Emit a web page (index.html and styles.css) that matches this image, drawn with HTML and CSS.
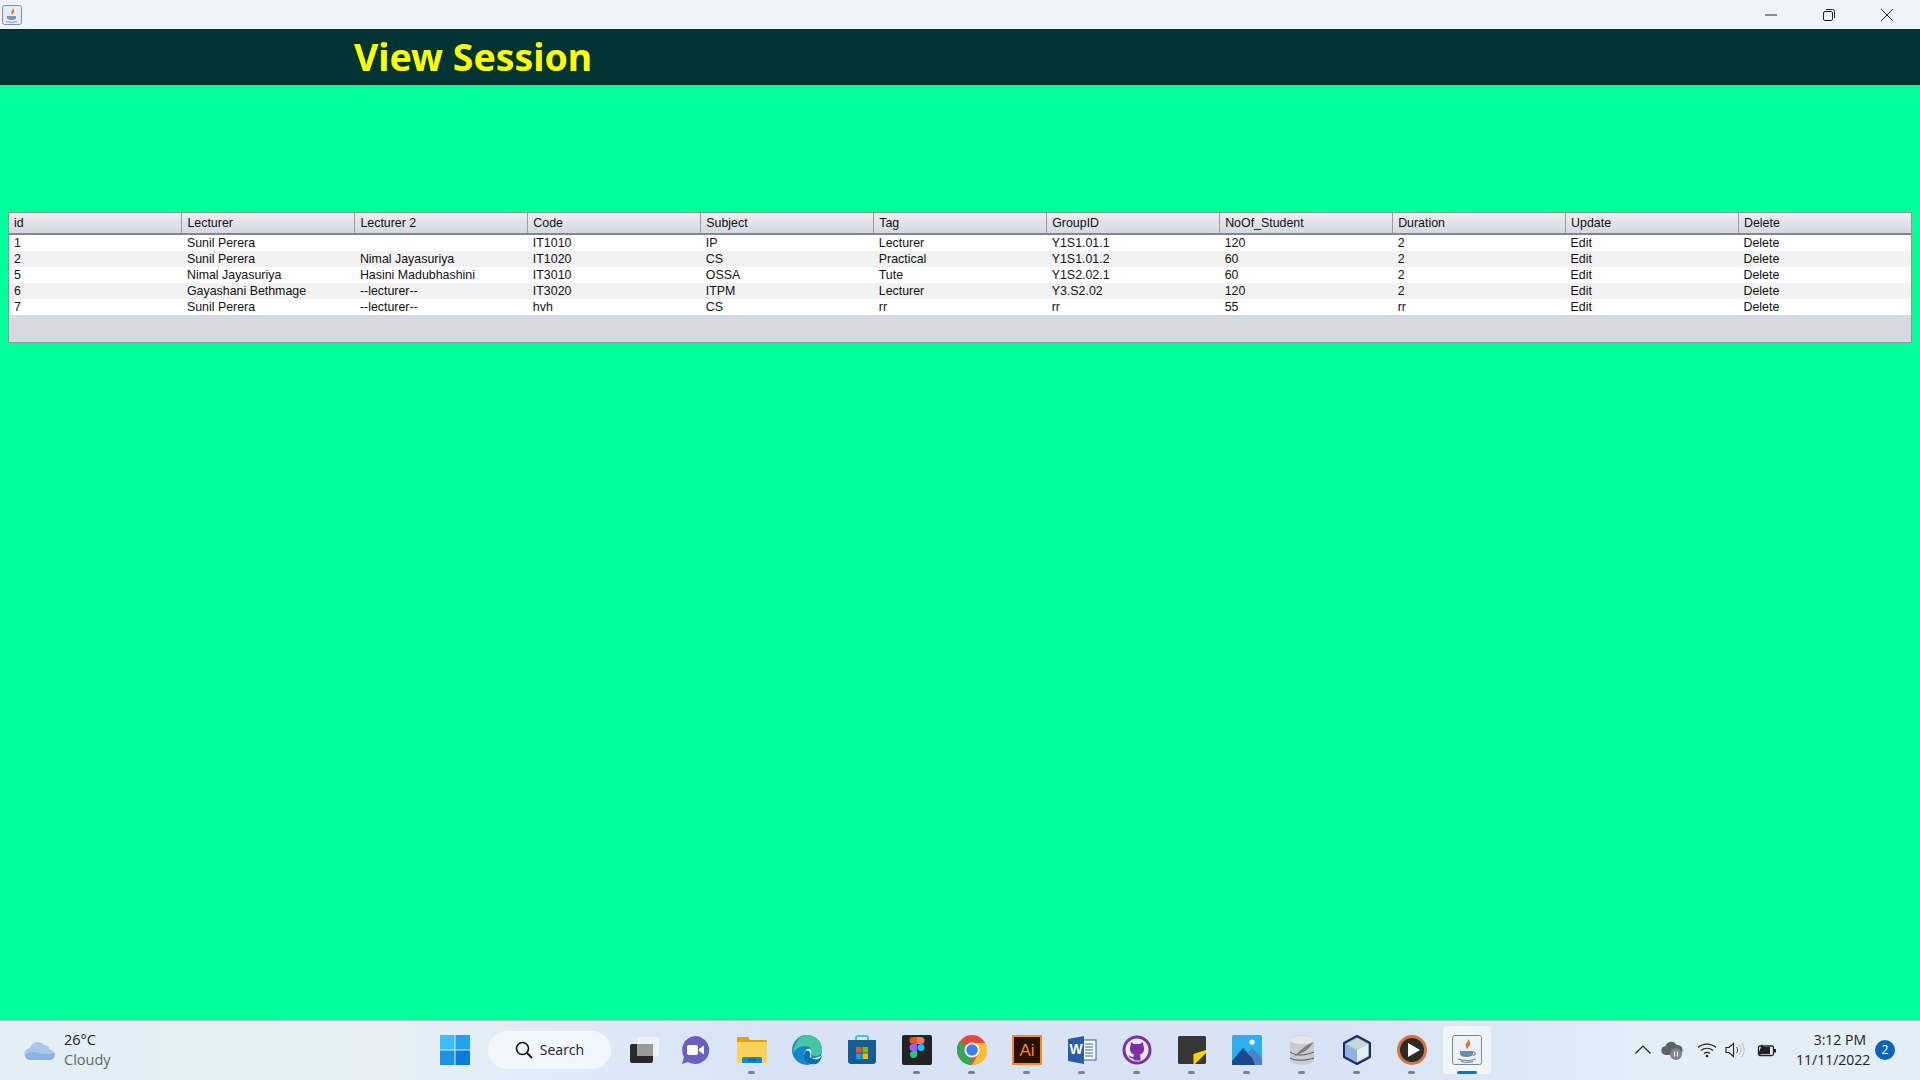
FILE: index.html
```html
<!DOCTYPE html>
<html>
	<head>
		<meta charset="utf-8">
		<title>View Session</title>
		<link rel="stylesheet" href="styles.css">
	</head>
	<body>
		<!-- window title bar -->
		<div class="titlebar">
			<div class="app-icon">
				<svg width="20" height="20" viewBox="0 0 20 20">
					<rect x="0.5" y="0.5" width="19" height="19" rx="2" fill="#e9edf3" stroke="#7f93aa"/>
					<path d="M10.5 3c1 2-2 3-1 5.500 .5 1 1 1 1.500 1.500-.5-2 2-3 .8-5.500z" fill="#e2762c"/>
					<path d="M5 11h9v2c0 1.500-2 2-4.500 2S5 14.500 5 13z" fill="#7c9ab8"/>
					<path d="M4 16.500c3 1 8 1 11 0" stroke="#7c9ab8" fill="none"/>
				</svg>
			</div>
			<div class="win-buttons">
				<div class="win-btn"><svg width="12" height="12" viewBox="0 0 12 12"><path d="M0 6h12" stroke="#222" fill="none"/></svg></div>
				<div class="win-btn"><svg width="12" height="12" viewBox="0 0 12 12"><rect x="0.500" y="2.500" width="9" height="9" rx="1.500" fill="none" stroke="#222"/><path d="M3 .500h6.500a2 2 0 0 1 2 2V9" fill="none" stroke="#222"/></svg></div>
				<div class="win-btn"><svg width="12" height="12" viewBox="0 0 12 12"><path d="M0 0l12 12M12 0L0 12" stroke="#222" fill="none"/></svg></div>
			</div>
		</div>

		<!-- heading -->
		<div class="header">
			<h1>View Session</h1>
		</div>

		<!-- session table -->
		<div class="content">
			<div class="table-box">
				<table class="sessions">
					<thead>
						<tr>
							<th>id</th><th>Lecturer</th><th>Lecturer 2</th><th>Code</th><th>Subject</th><th>Tag</th><th>GroupID</th><th>NoOf_Student</th><th>Duration</th><th>Update</th><th>Delete</th>
						</tr>
					</thead>
					<tbody>
						<tr><td>1</td><td>Sunil Perera</td><td></td><td>IT1010</td><td>IP</td><td>Lecturer</td><td>Y1S1.01.1</td><td>120</td><td>2</td><td>Edit</td><td>Delete</td></tr>
						<tr><td>2</td><td>Sunil Perera</td><td>Nimal Jayasuriya</td><td>IT1020</td><td>CS</td><td>Practical</td><td>Y1S1.01.2</td><td>60</td><td>2</td><td>Edit</td><td>Delete</td></tr>
						<tr><td>5</td><td>Nimal Jayasuriya</td><td>Hasini Madubhashini</td><td>IT3010</td><td>OSSA</td><td>Tute</td><td>Y1S2.02.1</td><td>60</td><td>2</td><td>Edit</td><td>Delete</td></tr>
						<tr><td>6</td><td>Gayashani Bethmage</td><td>--lecturer--</td><td>IT3020</td><td>ITPM</td><td>Lecturer</td><td>Y3.S2.02</td><td>120</td><td>2</td><td>Edit</td><td>Delete</td></tr>
						<tr><td>7</td><td>Sunil Perera</td><td>--lecturer--</td><td>hvh</td><td>CS</td><td>rr</td><td>rr</td><td>55</td><td>rr</td><td>Edit</td><td>Delete</td></tr>
					</tbody>
				</table>
			</div>
		</div>

		<!-- windows taskbar -->
		<div class="taskbar">
			<div class="weather">
				<svg width="32" height="24" viewBox="0 0 32 24">
					<path d="M7 22a6 6 0 0 1-1-12 8 8 0 0 1 14-3 6.500 6.500 0 0 1 6 5 5 5 0 0 1 0 10z" fill="#a9c6ef"/>
					<path d="M1 17c4-3 9-4 14-2s11 1 16 0c0 3-2 7-5 7H7c-3 0-6-2-6-5z" fill="#8db2e6"/>
				</svg>
				<div class="weather-text">
					<div class="temp">26°C</div>
					<div class="sky">Cloudy</div>
				</div>
			</div>
			<div class="slots">
				<div class="slot">
					<svg width="30" height="30" viewBox="0 0 30 30">
						<rect x="0" y="0" width="14.500" height="14.500" fill="#3cbdf6"/>
						<rect x="15.500" y="0" width="14.500" height="14.500" fill="#1fa2ee"/>
						<rect x="0" y="15.500" width="14.500" height="14.500" fill="#1b94e6"/>
						<rect x="15.500" y="15.500" width="14.500" height="14.500" fill="#0b7cd8"/>
					</svg>
				</div>
				<div class="search">
					<svg width="18" height="18" viewBox="0 0 18 18"><circle cx="7.500" cy="7.500" r="6" fill="none" stroke="#111" stroke-width="1.600"/><path d="M12 12l5 5" stroke="#111" stroke-width="1.800"/></svg>
					<span>Search</span>
				</div>
				<div class="slot taskview">
					<svg width="30" height="30" viewBox="0 0 30 30">
						<rect x="1" y="9" width="23" height="19" rx="2" fill="#2a2a2a"/>
						<rect x="8" y="2" width="22" height="19" rx="1" fill="#eef1f6"/>
						<rect x="8" y="9" width="16" height="12" fill="#9a9a9a"/>
					</svg>
				</div>
				<div class="slot chat">
					<svg width="30" height="30" viewBox="0 0 30 30">
						<path d="M15 1a14 14 0 1 1-7 26l-6 2 2-7A14 14 0 0 1 15 1z" fill="#6a5fc1"/>
						<rect x="7" y="10" width="11" height="10" rx="2" fill="#fff"/>
						<path d="M19 14l5-3.500v9L19 16z" fill="#fff"/>
					</svg>
				</div>
				<div class="slot on">
					<svg width="30" height="30" viewBox="0 0 30 30">
						<path d="M0 3a1 1 0 0 1 1-1h10l2 3h16a1 1 0 0 1 1 1v4H0z" fill="#dfa30e"/>
						<path d="M0 7h30v20a1 1 0 0 1-1 1H1a1 1 0 0 1-1-1z" fill="#fcd35a"/>
						<path d="M5 24a2 2 0 0 1 2-2h16a2 2 0 0 1 2 2v4H5z" fill="#1485cf"/>
						<path d="M11 25h8" stroke="#0c4f8a"/>
					</svg>
				</div>
				<div class="slot">
					<svg width="30" height="30" viewBox="0 0 30 30">
						<circle cx="15" cy="15" r="15" fill="#1388cc"/>
						<path d="M15 0a15 15 0 0 1 15 15c0 4-3 6-7 6-3 0-4-1-4-2 2-3 0-8-6-8-5 0-10 3-12 7C2 8 8 0 15 0z" fill="#45c6a2"/>
						<path d="M19 19c-1 4 3 6 7 5l4-3c-1 4-4 8-6 8-6 1-12-2-12-8 0-3 2-6 5-6 2 0 3 2 2 4z" fill="#0d6fb3"/>
						<path d="M12 21c0-4 2-8 6-7 2 1 2 3 1 5-1 4 3 6 7 5 1 0 3-2 3-3-1 0-4 2-8 2-3 0-4-1-3-3 1-3-2-6-6-3z" fill="#dbe6f6"/>
					</svg>
				</div>
				<div class="slot">
					<svg width="30" height="30" viewBox="0 0 30 30">
						<path d="M9 6V3a2 2 0 0 1 2-2h8a2 2 0 0 1 2 2v3" fill="none" stroke="#2ab4e8" stroke-width="1.600"/>
						<path d="M1 5h28v21a3 3 0 0 1-3 3H4a3 3 0 0 1-3-3z" fill="#175b93"/>
						<rect x="9" y="12" width="5.500" height="5.500" fill="#f25022"/>
						<rect x="15.500" y="12" width="5.500" height="5.500" fill="#7fba00"/>
						<rect x="9" y="18.500" width="5.500" height="5.500" fill="#00a4ef"/>
						<rect x="15.500" y="18.500" width="5.500" height="5.500" fill="#ffb900"/>
					</svg>
				</div>
				<div class="slot on">
					<svg width="30" height="30" viewBox="0 0 30 30">
						<rect width="30" height="30" rx="2" fill="#232323"/>
						<path d="M15 2H11a3.500 3.500 0 0 0 0 7h4z" fill="#f24e1e"/>
						<path d="M15 2h4a3.500 3.500 0 0 1 0 7h-4z" fill="#ff7262"/>
						<path d="M15 9H11a3.500 3.500 0 0 0 0 7h4z" fill="#a259ff"/>
						<circle cx="19" cy="12.500" r="3.500" fill="#1abcfe"/>
						<path d="M11 16h4v3.500a3.500 3.500 0 1 1-4-3.500z" fill="#0acf83"/>
					</svg>
				</div>
				<div class="slot on">
					<svg width="30" height="30" viewBox="0 0 30 30">
						<circle cx="15" cy="15" r="15" fill="#e8483a"/>
						<path d="M15 15L2 22.500A15 15 0 0 0 15 30z" fill="#34a853"/>
						<path d="M2 22.500A15 15 0 0 1 3 6l12 9z" fill="#34a853"/>
						<path d="M15 8h13.500A15 15 0 0 1 15 30l6-11z" fill="#fbc02d"/>
						<circle cx="15" cy="15" r="7.500" fill="#fff"/>
						<circle cx="15" cy="15" r="5.800" fill="#3f7ee8"/>
					</svg>
				</div>
				<div class="slot on">
					<svg width="30" height="30" viewBox="0 0 30 30">
						<rect x="1" y="1" width="28" height="28" fill="#2b0f00" stroke="#f58a1f" stroke-width="2"/>
						<text x="15" y="21" class="ai-text">Ai</text>
					</svg>
				</div>
				<div class="slot on">
					<svg width="30" height="30" viewBox="0 0 30 30">
						<rect x="11" y="5" width="18" height="20" fill="#fff" stroke="#2b5ca8"/>
						<path d="M18 9h8M18 12h8M18 15h8M18 18h8M18 21h8" stroke="#2b5ca8"/>
						<path d="M1 4l16-3v28L1 26z" fill="#2b5ca8"/>
						<text x="9" y="19" class="word-text">W</text>
					</svg>
				</div>
				<div class="slot on">
					<svg width="30" height="30" viewBox="0 0 30 30">
						<circle cx="15" cy="15" r="13" fill="#e7eaf5" stroke="#7f2f9f" stroke-width="3"/>
						<path d="M9 7l3 2h6l3-2 .5 4c1 2 1 5-1 7-1 1-2 1.500-3 1.500 1 1 1 2 1 3v3h-7v-2c-3 .5-4-1-5-3 1.500 0 2 2 5 1.500 0-1 0-2 1-2.500-1 0-2-.5-3-1.500-2-2-2-5-1-7z" fill="#7f2f9f"/>
					</svg>
				</div>
				<div class="slot on">
					<svg width="30" height="30" viewBox="0 0 30 30">
						<rect x="1" y="1" width="28" height="28" rx="1.500" fill="#363636"/>
						<path d="M16.500 19L29 15v3L18 29h-1.500z" fill="#ffd400"/>
					</svg>
				</div>
				<div class="slot on">
					<svg width="30" height="30" viewBox="0 0 30 30">
						<rect width="30" height="30" rx="1.500" fill="#2ab0ea"/>
						<circle cx="20" cy="7" r="2.600" fill="#fff"/>
						<path d="M16 17l4-4 10 10v7h-6z" fill="#4f7fcb"/>
						<path d="M0 26l11-13 10 11 2 6H0z" fill="#1b4a8c"/>
					</svg>
				</div>
				<div class="slot on">
					<svg width="30" height="30" viewBox="0 0 30 30">
						<path d="M3 5c0-6 24-6 24 0v20c0 6-24 6-24 0z" fill="#c9cbce"/>
						<ellipse cx="15" cy="5" rx="12" ry="4" fill="#e6e7e9"/>
						<path d="M3 17c6 4 14 4 24 0M3 23c6 3 14 3 24 0" fill="none" stroke="#555"/>
						<path d="M7 22C12 16 18 10 27 7c-4 5-8 10-15 12" fill="#7d7f82"/>
					</svg>
				</div>
				<div class="slot on">
					<svg width="30" height="30" viewBox="0 0 30 30">
						<path d="M15 1l13 7v14l-13 7-13-7V8z" fill="#8bb2e0" stroke="#1e2a63" stroke-width="2" stroke-linejoin="round"/>
						<path d="M15 3l11 6-11 6-11-6z" fill="#bfdcd4"/>
						<path d="M15 15l11-6v12l-11 6z" fill="#dfeeee"/>
					</svg>
				</div>
				<div class="slot on">
					<svg width="30" height="30" viewBox="0 0 30 30">
						<circle cx="15" cy="15" r="13.500" fill="#2b2b2b" stroke="#d9743e" stroke-width="3"/>
						<path d="M11 8l12 7-12 7z" fill="#fff"/>
					</svg>
				</div>
				<div class="slot active">
					<svg width="30" height="30" viewBox="0 0 30 30">
						<rect x="0.500" y="0.500" width="29" height="29" rx="2" fill="#eef1f6" stroke="#7b8796"/>
						<path d="M16 3c2 3-4 5-2 9 .5 1 1.500 2 2 2.500-1-3 4-4 1.500-8.500-.5-1-1-2-1.500-3z" fill="#e2762c"/>
						<path d="M8 16h13v3c0 2-3 3-6.500 3S8 21 8 19z" fill="#6f8ca8"/>
						<path d="M21 17c3 0 3 3 0 3.500M6 24c5 2 13 2 18 0M9 26.500c4 1 9 1 12 0" stroke="#6f8ca8" fill="none" stroke-width="1.200"/>
					</svg>
				</div>
			</div>
			<div class="tray">
				<svg class="tray-chevron" width="16" height="9" viewBox="0 0 16 9"><path d="M.5 8.500L8 1l7.500 7.500" fill="none" stroke="#222" stroke-width="1.200"/></svg>
				<svg class="tray-cloud" width="22" height="20" viewBox="0 0 22 20">
					<path d="M5 15a4.500 4.500 0 0 1-.5-9 6 6 0 0 1 11-1 5 5 0 0 1 2 10z" fill="#606468"/>
					<circle cx="15" cy="14" r="6" fill="#808388"/>
					<path d="M13.500 11.500v5M16.500 11.500v5" stroke="#fff" stroke-width="1.200"/>
				</svg>
				<svg class="tray-wifi" width="20" height="16" viewBox="0 0 20 16">
					<path d="M1 5.500c5-4.500 13-4.500 18 0M4 8.500c3.500-3 8.500-3 12 0M7 11.500c2-1.500 4-1.500 6 0" fill="none" stroke="#222" stroke-width="1.200"/>
					<circle cx="10" cy="14" r="1.300" fill="#222"/>
				</svg>
				<svg class="tray-sound" width="20" height="16" viewBox="0 0 20 16">
					<path d="M1 5.500h3L8.500 1.500v13L4 10.500H1z" fill="none" stroke="#222" stroke-width="1.100"/>
					<path d="M11.500 5c1.500 2 1.500 4 0 6" fill="none" stroke="#444"/>
					<path d="M14 3c2.500 3 2.500 7 0 10M16.500 1c3.500 4 3.500 10 0 14" fill="none" stroke="#b5b9c0"/>
				</svg>
				<svg class="tray-battery" width="20" height="14" viewBox="0 0 20 14">
					<rect x="1.500" y="3" width="15" height="9.500" rx="1.500" fill="none" stroke="#222" stroke-width="1.300"/>
					<rect x="17" y="6" width="2" height="3.500" fill="#222"/>
					<path d="M1 12L5 1l1.500 3H13v7H5z" fill="#222"/>
				</svg>
				<div class="clock">
					<div>3:12 PM</div>
					<div>11/11/2022</div>
				</div>
				<div class="badge">2</div>
			</div>
		</div>
	</body>
</html>
```

FILE: styles.css
```css
html, body {
	margin: 0;
	padding: 0;
}

body {
	width: 1920px;
	height: 1080px;
	display: flex;
	flex-direction: column;
	overflow: hidden;
	background: #00ff99;
	font-family: "Liberation Sans", Arial, sans-serif;
}

/* title bar */
.titlebar {
	height: 29px;
	background: #eff3fb;
	display: flex;
	align-items: center;
	justify-content: space-between;
}

.app-icon {
	display: flex;
	margin-left: 2px;
}

.win-buttons {
	display: flex;
	padding-right: 4px;
}

.win-btn {
	width: 58px;
	height: 29px;
	display: flex;
	align-items: center;
	justify-content: center;
}

/* heading */
.header {
	height: 56px;
	background: #003333;
	display: flex;
	align-items: center;
	padding-left: 354px;
}

.header h1 {
	margin: 0;
	color: #ffff00;
	font-family: "Noto Sans", sans-serif;
	font-size: 37.4px;
	line-height: 56px;
	font-weight: bold;
}

/* table */
.content {
	flex: 1;
	padding: 127px 8px 0 8px;
}

.table-box {
	width: 1904px;
	height: 131px;
	box-sizing: border-box;
	background: #d6d9e0;
	border: 1px solid #8f9299;
	overflow: hidden;
}

.sessions {
	width: 1903px;
	table-layout: fixed;
	border-collapse: collapse;
	font-size: 12.4px;
	color: #111;
}

.sessions th {
	height: 21px;
	padding: 0 0 0 5px;
	text-align: left;
	font-weight: normal;
	background: linear-gradient(#eeeef2, #d5d8df);
	border-right: 1px solid #9a9da5;
	border-bottom: 2px solid #84878e;
	box-sizing: border-box;
}

.sessions td {
	height: 16px;
	padding: 0 0 0 5px;
	background: #fff;
	line-height: 16px;
	white-space: nowrap;
	overflow: hidden;
}

.sessions tr:nth-child(even) td {
	background: #f2f2f2;
}

/* taskbar */
.taskbar {
	height: 57px;
	padding-bottom: 2px;
	border-top: 1px solid #b9c0cc;
	display: flex;
	align-items: center;
	background: linear-gradient(90deg, #e3eef6 0%, #e6f0f6 20%, #d8e3f5 40%, #d8e3f5 70%, #e3eef6 88%);
}

.weather {
	width: 427px;
	box-sizing: border-box;
	padding-left: 24px;
	display: flex;
	align-items: center;
	gap: 8px;
	font-family: "Open Sans", sans-serif;
	font-size: 14.5px;
	line-height: 20px;
}

.temp {
	color: #222;
}

.sky {
	color: #666;
}

.slots {
	display: flex;
	align-items: center;
}

.slot {
	width: 55px;
	height: 48px;
	display: flex;
	align-items: center;
	justify-content: center;
	position: relative;
	box-sizing: border-box;
}

.slot.taskview {
	width: 52px;
	padding-left: 2px;
}

.slot.chat {
	padding-right: 3px;
}

.slot.on::after {
	content: "";
	position: absolute;
	left: 24px;
	bottom: 0;
	width: 7px;
	height: 3px;
	border-radius: 2px;
	background: #7d838c;
}

.slot.active {
	width: 48px;
	margin: 0 3px 0 4px;
	background: #f0f4fb;
	border-radius: 4px;
}

.slot.active::after {
	content: "";
	position: absolute;
	left: 14px;
	bottom: 0;
	width: 20px;
	height: 3px;
	border-radius: 2px;
	background: #0a74d1;
}

.search {
	width: 123px;
	height: 38px;
	margin: 0 6px;
	box-sizing: border-box;
	border-radius: 19px;
	background: #f1f5fd;
	display: flex;
	align-items: center;
	justify-content: center;
	gap: 7px;
	font-family: "Open Sans", sans-serif;
	font-size: 14px;
	color: #222;
}

.ai-text {
	fill: #f58a1f;
	font-family: "Liberation Sans", sans-serif;
	font-size: 17px;
	text-anchor: middle;
}

.word-text {
	fill: #fff;
	font-family: "Liberation Sans", sans-serif;
	font-size: 14px;
	font-weight: bold;
	text-anchor: middle;
}

.tray {
	margin-left: auto;
	display: flex;
	align-items: center;
	padding-right: 25px;
}

.tray-chevron {
	margin-right: 10px;
}

.tray-cloud {
	margin-right: 14px;
}

.tray-wifi {
	margin-right: 8px;
}

.tray-sound {
	margin-right: 12px;
}

.tray-battery {
	margin-right: 19px;
}

.clock {
	width: 70px;
	text-align: right;
	font-family: "Open Sans", sans-serif;
	font-size: 14px;
	line-height: 20px;
	color: #222;
}

.badge {
	width: 20px;
	height: 20px;
	margin-left: 9px;
	border-radius: 50%;
	background: #0a64b8;
	color: #fff;
	font-family: "Open Sans", sans-serif;
	font-size: 12px;
	line-height: 20px;
	text-align: center;
}
```
